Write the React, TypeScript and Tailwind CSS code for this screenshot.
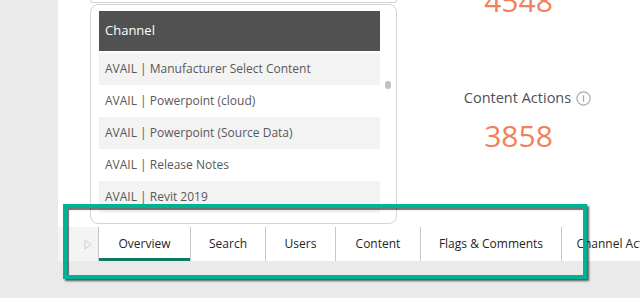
const ROWS = [
  'AVAIL | Manufacturer Select Content',
  'AVAIL | Powerpoint (cloud)',
  'AVAIL | Powerpoint (Source Data)',
  'AVAIL | Release Notes',
  'AVAIL | Revit 2019',
  'AVAIL | Revit 2020',
]

const TABS = [
  { label: 'Overview', w: 'w-[92px]', active: true },
  { label: 'Search', w: 'w-[75px]' },
  { label: 'Users', w: 'w-[70px]' },
  { label: 'Content', w: 'w-[85px]' },
  { label: 'Flags & Comments', w: 'w-[141px]' },
  { label: 'Channel Actions', w: 'w-[120px]' },
]

function InfoIcon() {
  return (
    <svg width="15" height="15" viewBox="0 0 15 15" className="ml-[5px] shrink-0">
      <circle cx="7.5" cy="7.5" r="6.6" fill="none" stroke="#a8a8a8" strokeWidth="1.2" />
      <line x1="7.5" y1="4.2" x2="7.5" y2="10.8" stroke="#a8a8a8" strokeWidth="1.3" />
    </svg>
  )
}

export default function App() {
  return (
    <div
      className="relative flex h-[298px] w-[640px] overflow-hidden bg-[#eaeaea]"
      style={{ fontFamily: '"Open Sans", "Liberation Sans", sans-serif' }}
    >
      <div className="w-[58px] shrink-0" />

      <div className="flex h-[261px] min-w-0 flex-1 flex-col overflow-hidden bg-white">
        <div className="flex h-[227px] overflow-hidden">
          {/* table visual */}
          <div className="ml-[32px] flex w-[307px] shrink-0 flex-col">
            <div className="h-[3px] rounded-b-[8px] border-x border-b border-[#d4d4d4]" />
            <div className="mt-[1px] flex h-[220px] rounded-[8px] border border-[#d4d4d4] pl-[8px] pt-[6px]">
              <div className="flex w-[281px] flex-col overflow-hidden">
                <div className="flex h-[40px] shrink-0 items-center bg-[#515151] pl-[6px] text-[13px] text-white">
                  Channel
                </div>
                <div className="mt-[2px] flex h-[160px] flex-col overflow-hidden">
                  {ROWS.map((r, i) => (
                    <div
                      key={r}
                      className={`flex h-[32px] shrink-0 items-center pl-[6px] text-[12px] text-[#5a5856] ${
                        i % 2 === 0 ? 'bg-[#f3f3f3]' : 'bg-white'
                      }`}
                    >
                      {r}
                    </div>
                  ))}
                </div>
              </div>
              <div className="flex flex-1 justify-center pt-[70px]">
                <div className="h-[8px] w-[6px] rounded-full bg-[#c2c2c2]" />
              </div>
            </div>
          </div>

          {/* kpi cards */}
          <div className="flex min-w-0 flex-1 flex-col items-center">
            <div className="mt-[-19px] h-[40px] text-[30px] leading-[40px] text-[#f1805b]">4548</div>
            <div className="mt-[67px] ml-[18px] flex h-[20px] items-center whitespace-nowrap text-[14.5px] leading-[20px] text-[#4f4f56]">
              Content Actions
              <InfoIcon />
            </div>
            <div className="mt-[8px] h-[40px] text-[30px] leading-[40px] text-[#f1805b]">3858</div>
          </div>
        </div>

        {/* page tabs */}
        <div className="flex h-[34px] text-[12px] text-[#252423]">
          <div className="flex w-[40px] shrink-0 items-center justify-end bg-[#f4f4f4] pr-[6px]">
            <svg width="8" height="11" viewBox="0 0 8 11">
              <path d="M1 1 L7 5.5 L1 10 Z" fill="none" stroke="#cfcfcf" strokeWidth="1" />
            </svg>
          </div>
          {TABS.map((t) => (
            <div
              key={t.label}
              className={`relative flex ${t.w} shrink-0 items-center justify-center border-l border-[#c8c8c8] whitespace-nowrap`}
            >
              {t.label}
              {t.active && <div className="absolute inset-x-0 bottom-0 h-[3px] bg-[#117865]" />}
            </div>
          ))}
        </div>
      </div>

      {/* highlight annotation */}
      <div className="absolute left-[63px] top-[204px] h-[75px] w-[524px] border-[4px] border-[#00b294] shadow-[2px_2px_2px_rgba(0,0,0,0.65),inset_2px_2px_1px_rgba(0,0,0,0.55)]" />
    </div>
  )
}
